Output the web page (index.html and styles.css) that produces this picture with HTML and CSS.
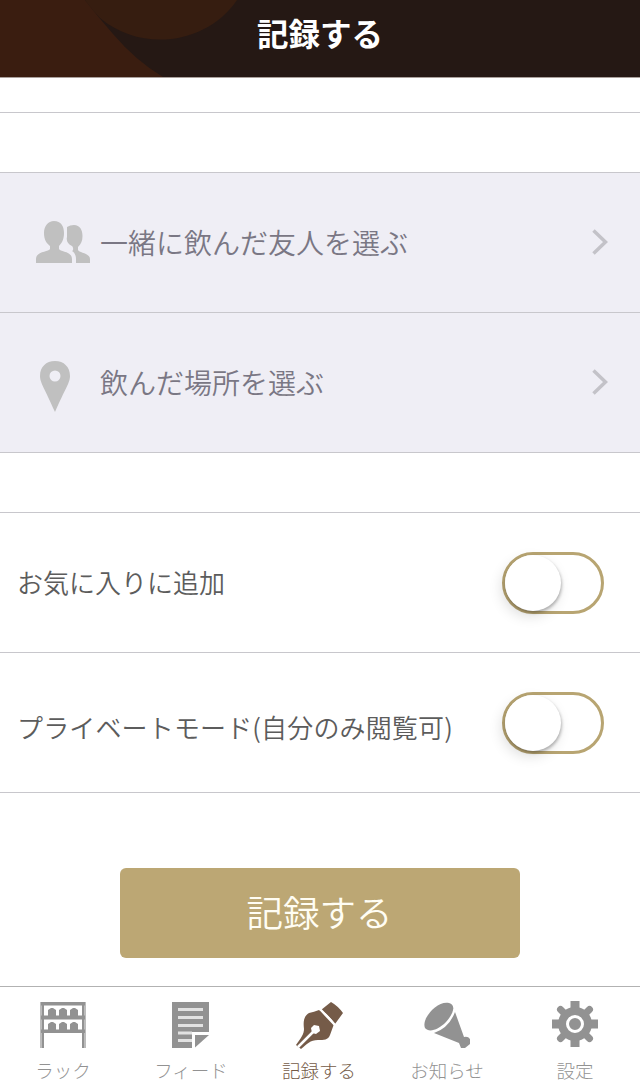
FILE: index.html
```html
<!doctype html>
<html lang="ja">
  <head>
    <meta charset="utf-8">
    <title>記録する</title>
    <link rel="stylesheet" href="styles.css">
  </head>
  <body>
    <header class="header">
      <svg class="header-pattern" width="320" height="77" viewBox="0 0 320 77">
        <path fill="#3a1d10" d="M0 0H85Q98 17 113 34Q136 61 163 77H0Z"/>
        <path fill="#361d10" d="M85 0H237C208 43 143 54 100 18Q92 10 85 0Z"/>
      </svg>
      <h1>記録する</h1>
    </header>

    <main class="content">
      <div class="spacer first"></div>
      <div class="spacer"></div>
      <a class="row link-row">
        <span class="row-icon">
          <svg width="54" height="42" viewBox="0 0 54 42">
            <path d="M18 0C25 0 28 5 28 12C28 18 26 22 23 25V28C24 31 36 30 36 38V42H0V38C0 30 13 31 14 28V25C10 22 8 18 8 12C8 5 12 0 18 0Z"/>
            <path d="M38 4C44 4 46.500 9 46.500 15C46.500 20 45 23 42 26V29C43 32 54 32 54 38V42H40V38C40 34 38 31 36 30C38 29 37 26 36 25C32 23 30 20 31 16V6Q34 4 38 4Z"/>
          </svg>
        </span>
        <span class="label">一緒に飲んだ友人を選ぶ</span>
        <svg class="chevron" width="16" height="26" viewBox="0 0 16 26"><path d="M1.500 1.500L13.500 13L1.500 24.500"/></svg>
      </a>
      <a class="row link-row">
        <span class="row-icon pin">
          <svg width="30" height="51" viewBox="0 0 30 51">
            <path fill-rule="evenodd" d="M15 0C24 0 30 6 30 15C30 22 25 28 15 51C5 28 0 22 0 15C0 6 6 0 15 0ZM15 9.500A5.500 5.500 0 1 0 15 20.500A5.500 5.500 0 1 0 15 9.500Z"/>
          </svg>
        </span>
        <span class="label">飲んだ場所を選ぶ</span>
        <svg class="chevron" width="16" height="26" viewBox="0 0 16 26"><path d="M1.500 1.500L13.500 13L1.500 24.500"/></svg>
      </a>
      <div class="spacer"></div>
      <div class="row switch-row">
        <span class="label">お気に入りに追加</span>
        <span class="switch"><span class="knob"></span></span>
      </div>
      <div class="row switch-row private">
        <span class="label">プライベートモード(自分のみ閲覧可)</span>
        <span class="switch"><span class="knob"></span></span>
      </div>
      <button class="submit">記録する</button>
    </main>

    <nav class="tabs">
      <a class="tab">
        <svg width="46" height="48" viewBox="0 0 46 48">
          <path class="posts" d="M0 1H4V47H0ZM42 1H46V47H42Z"/>
          <path d="M1 1H45V4.500H1ZM1 14.500H45V18.500H1ZM1 28.500H45V32H1ZM2 1H4V47H2ZM42 1H44V47H42Z"/>
          <path d="M8 15V9L11 7H13L16 9V15ZM19 15V9L22 7H24L27 9V15ZM30 15V9L33 7H35L38 9V15ZM8 29V23L11 21H13L16 23V29ZM19 29V23L22 21H24L27 23V29ZM30 29V23L33 21H35L38 23V29Z"/>
        </svg>
        <span>ラック</span>
      </a>
      <a class="tab">
        <svg width="38" height="48" viewBox="0 0 38 48">
          <path d="M0 1H37V31H20V47H0Z"/>
          <path d="M23 34H37L23 46.500Z"/>
          <path class="lines" d="M6 8.500H31M6 16.500H31M6 24.500H31M6 32H20M6 39.500H20"/>
        </svg>
        <span>フィード</span>
      </a>
      <a class="tab active">
        <svg width="48" height="48" viewBox="0 0 48 48">
          <path d="M24 9C29 12 35 17 39 23L35 34C33 39 29 39 23 39C15 39 12 43 6 48L1 44C6 37 9 33 9 28C8 20 9 15 14 12Q19 11 24 9Z"/>
          <path d="M36 1Q43 5 48 12L40 23Q34 14 26 9Z"/>
          <path class="cut" d="M25 8L40 24M3 46L20 29"/>
          <path class="nib" d="M19 24L24 25L25 30L21 33L17 32L16 27Z"/>
        </svg>
        <span>記録する</span>
      </a>
      <a class="tab">
        <svg width="48" height="48" viewBox="0 0 48 48">
          <path d="M26 2C33 4 31 12 23 21C15 29 6 32 2 27C-2 17 15-1 26 2Z"/>
          <path d="M32 11L41 36Q45 35 47 38V43L42 47H38L36 42L11 32Q26 27 32 11Z"/>
        </svg>
        <span>お知らせ</span>
      </a>
      <a class="tab">
        <svg width="46" height="46" viewBox="0 0 46 46">
          <path d="M18.500 0H27.500V46H18.500ZM0 18.500H46V27.500H0Z"/>
          <path class="spokes" d="M8.500 8.500L37.500 37.500M37.500 8.500L8.500 37.500"/>
          <circle cx="23" cy="23" r="17"/>
          <circle class="ring" cx="23" cy="23" r="7.500"/>
        </svg>
        <span>設定</span>
      </a>
    </nav>
  </body>
</html>
```

FILE: styles.css
```css
* {
  box-sizing: border-box;
}

body {
  margin: 0;
  height: 1081px;
  display: flex;
  flex-direction: column;
  background: #fff;
  font-family: "Noto Sans CJK JP", sans-serif;
  font-weight: 350;
  overflow: hidden;
}

.header {
  position: relative;
  flex: none;
  height: 78px;
  background: #251814;
  border-bottom: 1px solid #aaa09c;
  text-align: center;
}

.header-pattern {
  position: absolute;
  top: 0;
  left: 0;
}

.header h1 {
  position: relative;
  margin: 0;
  padding-top: 9px;
  color: #fff;
  font-size: 31.5px;
  font-weight: 700;
  line-height: 46px;
}

.content {
  flex: 1;
  display: flex;
  flex-direction: column;
}

.spacer {
  height: 60px;
  border-bottom: 1px solid #c8c7cc;
}

.spacer.first {
  height: 35px;
}

.row {
  display: flex;
  align-items: center;
  height: 140px;
  border-bottom: 1px solid #c8c7cc;
}

.link-row {
  padding: 0 32px 2px 36px;
  background: #efeef5;
  color: #7a7784;
  font-size: 28px;
}

.row-icon {
  display: flex;
  width: 64px;
  fill: #c0c0c0;
}

.row-icon.pin {
  padding: 9px 0 0 4px;
}

.link-row .label {
  flex: 1;
}

.chevron {
  fill: none;
  stroke: #c3c2c8;
  stroke-width: 3.5;
}

.switch-row {
  justify-content: space-between;
  padding: 0 36px 0 17px;
  color: #5c5c5c;
  font-size: 26px;
}

.switch-row .label {
  padding-bottom: 2px;
}

.private .label {
  padding-top: 10px;
  letter-spacing: .15px;
}

.switch {
  width: 102px;
  height: 62px;
  border: 3px solid #b8a572;
  border-radius: 31px;
}

.knob {
  display: block;
  width: 56px;
  height: 56px;
  border-radius: 50%;
  background: #fff;
  box-shadow: 1px 2px 3px rgba(0, 0, 0, .25), -3px 5px 14px rgba(0, 0, 0, .14);
}

.submit {
  align-self: center;
  width: 400px;
  height: 90px;
  margin-top: 75px;
  padding: 0 1px 3px 0;
  border: 0;
  border-radius: 6px;
  background: #bca774;
  color: #fffdf3;
  font: 350 36.5px "Noto Sans CJK JP", sans-serif;
}

.tabs {
  flex: none;
  display: flex;
  height: 95px;
  border-top: 1px solid #b2b2b2;
}

.tab {
  width: 128px;
  display: flex;
  flex-direction: column;
  align-items: center;
  padding: 14px 2px 0 0;
  color: #929292;
  fill: #929292;
  font-size: 18.5px;
  font-weight: 300;
  line-height: 26px;
}

.tab svg {
  flex: none;
}

.tab span {
  margin-top: auto;
  margin-bottom: -2px;
}

.tab.active {
  color: #755b48;
  fill: #755b48;
}

.posts {
  fill: #bcbcbc;
}

.lines {
  fill: none;
  stroke: #e2e2e2;
  stroke-width: 3;
}

.cut {
  stroke: #fff;
  stroke-width: 2.5;
}

.nib {
  fill: #fff;
}

.spokes {
  stroke: #929292;
  stroke-width: 7;
  stroke-linecap: round;
}

.ring {
  fill: none;
  stroke: #fff;
  stroke-width: 3;
}
```
